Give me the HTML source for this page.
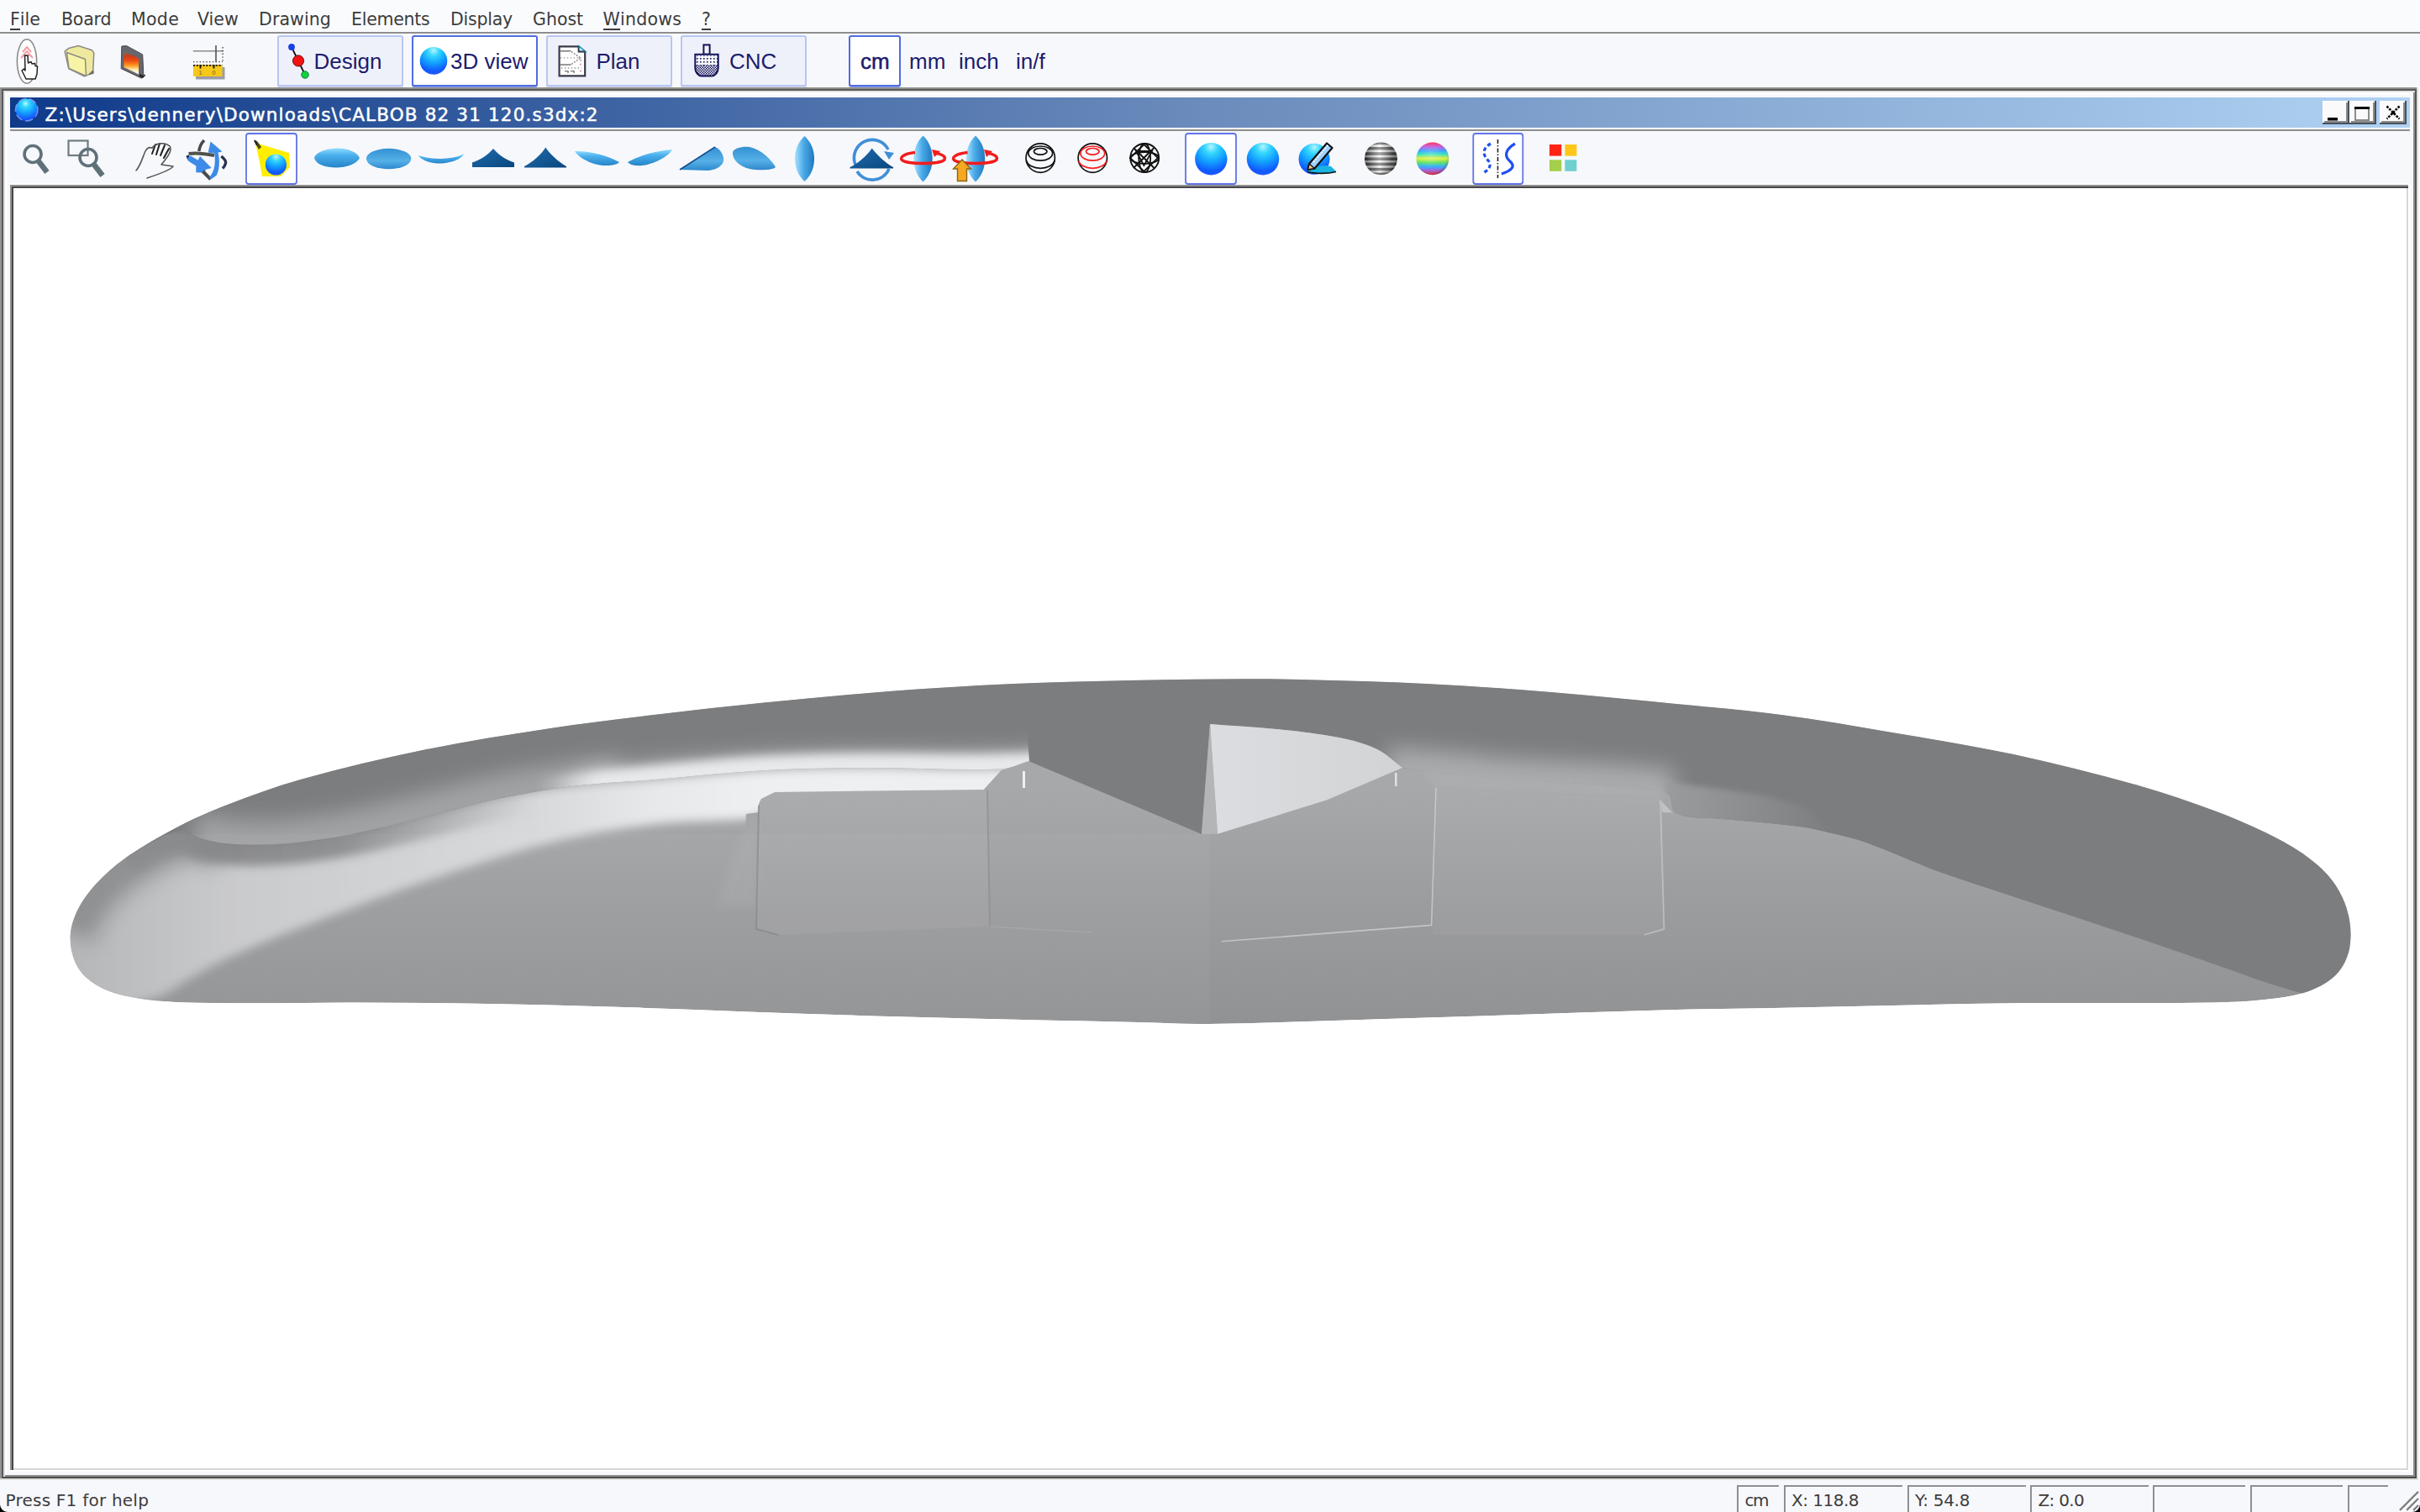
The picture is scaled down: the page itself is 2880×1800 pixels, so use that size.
<!DOCTYPE html>
<html>
<head>
<meta charset="utf-8">
<title>Shape3d X</title>
<style>
html,body{margin:0;padding:0;}
body{width:2880px;height:1800px;overflow:hidden;background:#f7f8fc;position:relative;font-family:"DejaVu Sans","Liberation Sans",sans-serif;}
.abs{position:absolute;}
#menubar{position:absolute;left:0;top:0;width:2880px;height:38px;background:#fafbfd;}
#menubar span{position:absolute;top:11px;font-size:20.5px;line-height:24px;color:#3c3c3c;white-space:nowrap;}
#menubar u{text-decoration:none;border-bottom:2px solid #3c3c3c;display:inline-block;line-height:22px;}
#menuline{position:absolute;left:0;top:38px;width:2880px;height:2px;background:#8e8e90;}
#toolbar{position:absolute;left:0;top:40px;width:2880px;height:64px;background:#f7f8fc;border-top:2px solid #fff;border-bottom:2px solid #fdfdfe;box-sizing:border-box;}
.tbtn{position:absolute;top:42px;height:57px;width:146px;border:2px solid #b9c6f3;background:#eff1fa;border-radius:3px;box-shadow:0 2px 0 #d5daf0;}
.tbtn.on{border-color:#4f6ce3;background:#ffffff;box-shadow:0 1px 0 #8ea2ea;}
.tlabel{position:absolute;font-family:"Liberation Sans",sans-serif;font-size:26px;line-height:30px;color:#1c1c6c;white-space:nowrap;}
#mdi{position:absolute;left:0;top:104px;width:2880px;height:1658px;background:#f7f8fc;}
#title{position:absolute;left:12px;top:116px;width:2856px;height:36px;background:linear-gradient(to right,#0f3a8a 0%,#6b8cbc 50%,#b0d2f3 100%);}
#titletext{position:absolute;left:53.5px;top:123px;font-size:21.5px;line-height:28px;color:#fff;letter-spacing:1.16px;white-space:nowrap;-webkit-text-stroke:0.5px #fff;}
#canvas{position:absolute;left:16px;top:224px;width:2848px;height:1524px;background:#fff;}
#status{position:absolute;left:0;top:1762px;width:2880px;height:38px;background:#f7f8fc;}
.sbox{position:absolute;top:1768px;height:32px;border-left:2px solid #8e8e94;border-top:2px solid #8e8e94;box-sizing:border-box;}
.stext{position:absolute;top:1774px;font-size:20px;letter-spacing:-0.5px;line-height:24px;color:#3c3c3c;white-space:nowrap;}
</style>
</head>
<body>
<!-- MENUBAR -->
<div id="menubar">
<span style="left:12px"><u>F</u>ile</span>
<span style="left:73px;letter-spacing:-0.2px">Board</span>
<span style="left:156px;letter-spacing:0.3px">Mode</span>
<span style="left:235px">View</span>
<span style="left:308px;letter-spacing:0.1px">Drawing</span>
<span style="left:418px;letter-spacing:-0.26px">Elements</span>
<span style="left:536px;letter-spacing:-0.23px">Display</span>
<span style="left:634px">Ghost</span>
<span style="left:717.5px;letter-spacing:0.25px"><u>W</u>indows</span>
<span style="left:835px"><u>?</u></span>
</div>
<div id="menuline"></div>
<!-- TOOLBAR -->
<div id="toolbar"></div>
<div class="tbtn" style="left:330px"></div>
<div class="tbtn on" style="left:490px"></div>
<div class="tbtn" style="left:650px"></div>
<div class="tbtn" style="left:810px"></div>
<div class="tbtn on" style="left:1010px;width:58px"></div>
<div class="tlabel" style="left:373.5px;top:58px">Design</div>
<div class="tlabel" style="left:536px;top:58px">3D view</div>
<div class="tlabel" style="left:709.5px;top:58px">Plan</div>
<div class="tlabel" style="left:868px;top:58px">CNC</div>
<div class="tlabel" style="left:1024px;top:58px;-webkit-text-stroke:0.5px #1c1c6c">cm</div>
<div class="tlabel" style="left:1082px;top:58px">mm</div>
<div class="tlabel" style="left:1141px;top:58px">inch</div>
<div class="tlabel" style="left:1209px;top:58px">in/f</div>
<svg class="abs" style="left:0;top:40px" width="1300" height="64" viewBox="0 40 1300 64">
<defs>
<radialGradient id="gS1" cx="0.5" cy="0.12" r="0.95"><stop offset="0" stop-color="#b4f4ff"/><stop offset="0.22" stop-color="#34d6ff"/><stop offset="0.5" stop-color="#12a0ff"/><stop offset="0.8" stop-color="#1058ff"/><stop offset="1" stop-color="#2c5cf4"/></radialGradient>
<linearGradient id="gFire" x1="0" y1="0" x2="0" y2="1"><stop offset="0" stop-color="#6a7a6a"/><stop offset="0.2" stop-color="#c83a18"/><stop offset="0.4" stop-color="#f04a10"/><stop offset="0.62" stop-color="#ff9a20"/><stop offset="0.8" stop-color="#ffe9b0"/><stop offset="1" stop-color="#ffffff"/></linearGradient>
<pattern id="pSparse" x="0" y="0" width="4" height="4" patternUnits="userSpaceOnUse"><rect x="1" y="1" width="1.6" height="1.6" fill="#14145a"/></pattern>
<pattern id="pDense" x="0" y="0" width="3" height="3" patternUnits="userSpaceOnUse"><rect x="0" y="0" width="1.5" height="1.5" fill="#14145a"/><rect x="1.5" y="1.5" width="1.5" height="1.5" fill="#14145a"/></pattern>
<filter id="tb" x="-20%" y="-20%" width="140%" height="140%"><feGaussianBlur stdDeviation="0.6"/></filter>
</defs>
<!-- A: board + hand -->
<g filter="url(#tb)">
<ellipse cx="32" cy="73" rx="11.6" ry="26.2" fill="#fdfdfd" stroke="#8a8a8a" stroke-width="1.6"/>
<path d="M27,62 L32,56 L37,62 M25,69 L32,61 L39,69 M28,66 L36,66" fill="none" stroke="#f4a0a8" stroke-width="2"/>
<path d="M29.5,66 L33,66 L33.5,75 L37,73.5 L38,76 L41.5,75.5 L42,78.5 L44.5,79 L44,88 L42,94 L31,94 L26,84 L28.5,82 L30,84Z" fill="#fff" stroke="#222" stroke-width="1.5" stroke-linejoin="round"/>
</g>
<!-- B: folder -->
<g filter="url(#tb)" stroke="#8c8c84" stroke-width="1.5" stroke-linejoin="round">
<path d="M81.7,57.4 L93.3,54.5 L109.5,59.7 L111.8,63.1 L110.7,84 L106,88.6 L100.2,90.9 L81.7,81.7 L77.1,61.4Z" fill="#efe9a0"/>
<path d="M79.5,62.5 L101.5,70.5 L102.5,90.5 L82,81.5Z" fill="#f8f4a6"/>
<path d="M106,88.6 L111,87 L110.7,84" fill="#777" stroke="#666"/>
</g>
<!-- C: save -->
<g filter="url(#tb)">
<path d="M144.8,55 L150.6,54.5 L169.7,64.9 L170.8,88.6 L173.1,89.8 L168.5,93.2 L144.2,81.7Z" fill="#66666c" stroke="#4a4a50" stroke-width="1"/>
<path d="M147.4,61.2 L165,69.3 L165,88.4 L147.4,80.1Z" fill="url(#gFire)"/>
<path d="M166,89.5 L171,91.5" stroke="#222" stroke-width="2.6"/>
</g>
<!-- D: ruler -->
<g>
<rect x="233" y="80" width="34.5" height="14.5" fill="#9c9caa"/>
<rect x="230" y="77" width="34.5" height="14" fill="#f5c81a"/>
<path d="M230,77.8 L264.5,77.8" stroke="#111" stroke-width="1.8" stroke-dasharray="2.2 1.6"/>
<path d="M238.5,77 L238.5,81.5 M254.5,77 L254.5,81.5" stroke="#111" stroke-width="1.8"/>
<path d="M229.8,60.8 L265.7,60.8" stroke="#8a8a8a" stroke-width="1.6"/>
<path d="M257,53.9 L257,73.6" stroke="#555" stroke-width="1.6"/>
<path d="M265.1,56 L265.1,73.6 M230,73.6 L265,73.6" stroke="#444" stroke-width="1.4" stroke-dasharray="1.4 2.4"/>
<text x="236.2" y="89.3" font-family="Liberation Sans, sans-serif" font-size="8" font-weight="bold" fill="#a8861a">1</text>
<text x="252.3" y="89.3" font-family="Liberation Sans, sans-serif" font-size="8" font-weight="bold" fill="#a8861a">0</text>
</g>
<!-- Design icon -->
<path d="M347,56 L363,89" stroke="#111" stroke-width="1.8"/>
<circle cx="347" cy="56" r="3.9" fill="#1a3ee0"/>
<circle cx="355" cy="72.4" r="6.6" fill="#f21212" stroke="#400" stroke-width="0.8"/>
<circle cx="363" cy="89" r="4.3" fill="#12d43c" stroke="#063" stroke-width="0.8"/>
<!-- 3D view sphere -->
<circle cx="516" cy="72.4" r="16.3" fill="url(#gS1)"/>
<!-- Plan icon -->
<g>
<path d="M665.6,55.4 L688.6,55.4 L696.2,61.5 L696.2,90.4 L665.6,90.4Z" fill="#fff" stroke="#3a3a48" stroke-width="2.2" stroke-linejoin="miter"/>
<path d="M688.6,54.6 L697,61.5 L688.6,61.5Z" fill="#c8f0ff" stroke="#1a9ac0" stroke-width="1.4"/>
<path d="M688.6,55.4 L688.6,61.5 L696.2,61.5" fill="none" stroke="#3a3a48" stroke-width="1.8"/>
<path d="M667,60.8 L679.5,60.8 M667,77 L679.5,77" stroke="#777" stroke-width="1.6"/>
<path d="M680,61.5 L691,69 L680,76.5" fill="none" stroke="#888" stroke-width="1.4" stroke-dasharray="2 1.5"/>
<path d="M667,68.9 L692,68.9 M668,81 L692,81" stroke="#999" stroke-width="1.4" stroke-dasharray="1.5 2.4"/>
<path d="M672,84.6 L676,84.6 L676,87 M679,84.6 L683,84.6 L683,87" fill="none" stroke="#777" stroke-width="1.4"/>
<path d="M690,72 L692,72 M690,76.5 L692,76.5 M690,84.5 L692,84.5" stroke="#d09090" stroke-width="1.4"/>
</g>
<!-- CNC icon -->
<g>
<rect x="837.4" y="53.4" width="7.2" height="11.3" fill="#f4f5fb" stroke="#14145a" stroke-width="2"/>
<path d="M827.3,64.7 L854.7,64.7 L854.7,81 C854.7,86 851,90.6 847,90.6 L835,90.6 C831,90.6 827.3,86 827.3,81Z" fill="#f4f5fb"/>
<path d="M827.3,66 L854.7,66 L854.7,78 L827.3,78Z" fill="url(#pSparse)"/>
<path d="M827.3,77.5 L854.7,77.5 L854.7,81 C854.7,86 851,90.6 847,90.6 L835,90.6 C831,90.6 827.3,86 827.3,81Z" fill="url(#pDense)"/>
<path d="M827.3,64.7 L854.7,64.7 L854.7,81 C854.7,86 851,90.6 847,90.6 L835,90.6 C831,90.6 827.3,86 827.3,81Z" fill="none" stroke="#14145a" stroke-width="2"/>
</g>
</svg>

<!-- MDI WINDOW -->
<div id="mdi"></div>
<div id="title"></div>
<div id="titletext">Z:\Users\dennery\Downloads\CALBOB 82 31 120.s3dx:2</div>
<svg class="abs" style="left:0;top:100px" width="2880" height="60" viewBox="0 100 2880 60">
<defs>
<radialGradient id="gSph" cx="0.45" cy="0.22" r="0.85"><stop offset="0" stop-color="#c8f4ff"/><stop offset="0.18" stop-color="#38dcff"/><stop offset="0.5" stop-color="#14a0ff"/><stop offset="0.85" stop-color="#1450ff"/><stop offset="1" stop-color="#2a5cf0"/></radialGradient>
</defs>
<circle cx="31.7" cy="130.7" r="13.2" fill="url(#gSph)"/>
<circle cx="31.7" cy="130.7" r="13.2" fill="none" stroke="#7f9cf5" stroke-width="1.6" stroke-dasharray="9 4" opacity="0.85"/>
<g shape-rendering="crispEdges">
<!-- min -->
<rect x="2764" y="120" width="32" height="28" fill="#46525f"/>
<rect x="2764" y="120" width="30" height="26" fill="#ffffff"/>
<rect x="2766" y="122" width="28" height="24" fill="#8c8c8c"/>
<rect x="2766" y="122" width="26" height="22" fill="#fafafa"/>
<rect x="2770" y="140" width="12" height="3" fill="#000"/>
<rect x="2770" y="143" width="12" height="1" fill="#777"/>
<!-- max -->
<rect x="2796" y="120" width="32" height="28" fill="#46525f"/>
<rect x="2796" y="120" width="30" height="26" fill="#ffffff"/>
<rect x="2798" y="122" width="28" height="24" fill="#8c8c8c"/>
<rect x="2798" y="122" width="26" height="22" fill="#fafafa"/>
<rect x="2802" y="128" width="18" height="16" fill="#8c8c8c"/>
<rect x="2804" y="130" width="14" height="12" fill="#fafafa"/>
<rect x="2802" y="127" width="18" height="3" fill="#000"/>
<!-- close -->
<rect x="2832" y="120" width="32" height="28" fill="#46525f"/>
<rect x="2832" y="120" width="30" height="26" fill="#ffffff"/>
<rect x="2834" y="122" width="28" height="24" fill="#8c8c8c"/>
<rect x="2834" y="122" width="26" height="22" fill="#fafafa"/>
</g>
<path d="M2840.5,126.5 L2855.5,141.5 M2855.5,126.5 L2840.5,141.5" stroke="#000" stroke-width="2.6" stroke-dasharray="2.6 1.4"/>
<rect x="2846" y="132" width="4" height="4" fill="#000"/>
</svg>

<svg class="abs" style="left:0;top:156px" width="2880" height="64" viewBox="0 156 2880 64">
<defs>
<radialGradient id="gS2" cx="0.5" cy="0.12" r="0.95"><stop offset="0" stop-color="#b4f4ff"/><stop offset="0.22" stop-color="#34d6ff"/><stop offset="0.5" stop-color="#12a0ff"/><stop offset="0.8" stop-color="#1058ff"/><stop offset="1" stop-color="#2c5cf4"/></radialGradient>
<linearGradient id="gB1" x1="0" y1="0" x2="0" y2="1"><stop offset="0" stop-color="#8fdcff"/><stop offset="0.35" stop-color="#4cb0ee"/><stop offset="1" stop-color="#2584c8"/></linearGradient>
<linearGradient id="gB2" x1="0" y1="0" x2="0" y2="1"><stop offset="0" stop-color="#3490d2"/><stop offset="0.6" stop-color="#56b0e8"/><stop offset="1" stop-color="#2d88cc"/></linearGradient>
<linearGradient id="gB3" x1="0" y1="0" x2="1" y2="0"><stop offset="0" stop-color="#a9e2ff"/><stop offset="0.45" stop-color="#4aaae8"/><stop offset="1" stop-color="#1f78be"/></linearGradient>
<linearGradient id="gT" x1="0" y1="0" x2="1" y2="1"><stop offset="0" stop-color="#1f6cae"/><stop offset="1" stop-color="#0a467e"/></linearGradient>
<linearGradient id="gStripeBg" x1="0" y1="0" x2="1" y2="0"><stop offset="0" stop-color="#666"/><stop offset="0.45" stop-color="#ffffff"/><stop offset="1" stop-color="#555"/></linearGradient>
<linearGradient id="gStripe" x1="0" y1="0" x2="1" y2="0"><stop offset="0" stop-color="#181818"/><stop offset="0.45" stop-color="#8a8a8a"/><stop offset="1" stop-color="#101010"/></linearGradient>
<linearGradient id="gRain" x1="0" y1="0" x2="0" y2="1"><stop offset="0" stop-color="#ff3050"/><stop offset="0.14" stop-color="#c060e0"/><stop offset="0.26" stop-color="#3aa0ff"/><stop offset="0.36" stop-color="#30e0c0"/><stop offset="0.5" stop-color="#e6f23a"/><stop offset="0.62" stop-color="#60e060"/><stop offset="0.74" stop-color="#30b0ff"/><stop offset="0.86" stop-color="#a060e0"/><stop offset="1" stop-color="#ff3040"/></linearGradient>
<radialGradient id="gShade" cx="0.45" cy="0.4" r="0.6"><stop offset="0" stop-color="#fff" stop-opacity="0.25"/><stop offset="0.7" stop-color="#fff" stop-opacity="0"/><stop offset="1" stop-color="#000" stop-opacity="0.25"/></radialGradient>
<clipPath id="cStripe"><circle cx="1643.4" cy="188.8" r="19.4"/></clipPath>
<filter id="ib" x="-20%" y="-20%" width="140%" height="140%"><feGaussianBlur stdDeviation="0.7"/></filter>
</defs>
<rect x="12" y="218" width="2856" height="2" fill="#ffffff"/>
<!-- 1 magnifier -->
<g stroke="#5f7178" fill="none" stroke-linecap="butt">
<circle cx="39" cy="183.5" r="10" stroke-width="3.6"/>
<path d="M46,192 L56,205" stroke-width="6.5"/>
<!-- 2 zoom rect -->
<rect x="81.5" y="167.5" width="23" height="17.5" stroke-width="2.2" stroke="#6d7c83"/>
<circle cx="105" cy="187.5" r="10" stroke-width="3.6"/>
<path d="M112,196 L122,209" stroke-width="6.5"/>
</g>
<!-- 3 hand -->
<g fill="none" stroke="#555" stroke-width="1.6" stroke-linecap="round" stroke-linejoin="round" filter="url(#ib)">
<path d="M162,203 C168,196 170,186 173,180 C175,176 178,175 181,176"/>
<path d="M181,183 L185,172 M186,184 L190,171 M191,185 L196,173 M195,188 L201,177" stroke="#222" stroke-width="2"/>
<path d="M181,176 C186,170 196,169 202,174 C205,178 200,186 196,191 L192,196 L206,198 C204,202 190,207 175,212" />
</g>
<!-- 4 rotate 3D -->
<g filter="url(#ib)">
<path d="M243,167 C239,171 237.5,175 236.8,180" fill="none" stroke="#4a4a4a" stroke-width="3.6"/>
<path d="M224.6,183 C234,181.5 245,183 255,185" fill="none" stroke="#50534a" stroke-width="4"/>
<path d="M223,185 L225,190" stroke="#1a2560" stroke-width="3.4" fill="none"/>
<path d="M222.3,188.4 L227,185.5 L235.6,190.7 L238,186 L251.8,200 L244.9,201.7 L243.7,205.7 L233.3,205.2 L233.3,197.6 L224.6,191.9Z" fill="#3d8be8"/>
<path d="M241.4,204 L250.6,213.3" stroke="#4a4a4a" stroke-width="4" fill="none"/>
<path d="M250.6,168.5 L264.5,180.5 L259.5,181.5 C262,192 261,203 257.5,209 L251,213.5 L249,211 C255,205 257,194 255.2,182.5 L247.7,181.5Z" fill="#3d8be8"/>
<path d="M263.4,186 C267,189 269,192 268.6,194 C268,197 266.5,199 265,200.5" fill="none" stroke="#2a3050" stroke-width="3.4"/>
</g>
<!-- 5 selected: light/sphere -->
<rect x="293" y="159" width="60" height="60" rx="3" fill="#fff" stroke="#6074e8" stroke-width="1.8"/>
<path d="M304,170 L344,182 L345,199 L334,210 L312,210 L310,198Z" fill="#ffee00"/>
<path d="M302,167 L308,178 L311,175 L306,168Z" fill="#4a4a20"/>
<path d="M303,167 L306,173" stroke="#222" stroke-width="2"/>
<circle cx="328.4" cy="196" r="12.6" fill="url(#gS2)"/>
<!-- 6 board top -->
<path d="M374,188 C376,180 392,176.5 402,176.5 C414,176.5 425,181 428,188 C425,195 412,199.5 400,199.5 C388,199.5 376,196 374,188Z" fill="url(#gB1)" filter="url(#ib)"/>
<!-- 7 board bottom -->
<ellipse cx="462.6" cy="189" rx="26.7" ry="12.3" fill="url(#gB2)" filter="url(#ib)"/>
<!-- 8 rocker -->
<path d="M498,185 C512,190 538,191 552,183 C548,192 530,195 520,194.5 C510,194 501,190 498,185Z" fill="url(#gB1)" filter="url(#ib)"/>
<!-- 9 triangle nose -->
<path d="M587,177 C593,184 603,191 612,193.5 L612,199 L562,199 L562,193.5 C571,191 581,184 587,177Z" fill="url(#gT)"/>
<!-- 10 triangle tail -->
<path d="M649.3,175.5 C655,184 665,193 674,198 L674,199.5 L624,199.5 L624,198 C634,193 644,184 649.3,175.5Z" fill="url(#gT)"/>
<!-- 11 leaf -->
<path d="M684,180 C700,179 724,185 737,193 C733,198 715,198.5 704,194 C694,190 687,185 684,180Z" fill="url(#gB1)" filter="url(#ib)"/>
<!-- 12 leaf mirrored -->
<path d="M747,193 C760,185 784,179 800,178 C796,186 780,194 768,196.5 C758,198 750,197 747,193Z" fill="url(#gB1)" filter="url(#ib)"/>
<!-- 13 wedge -->
<path d="M809,202 L851,175 C858,178 862,186 861,192 C859,199 850,202.5 842,203 Z" fill="url(#gB2)" filter="url(#ib)"/>
<path d="M809,202 L851,175" stroke="#14508c" stroke-width="1.6"/>
<!-- 14 blob -->
<path d="M872,181 C874,176 884,174 892,175 C906,178 918,190 923,199 C920,203 900,203 892,201 C880,198 871,190 872,181Z" fill="url(#gB2)" filter="url(#ib)"/>
<!-- 15 vertical lens -->
<path d="M957.5,162.0 C972.9,175.5 972.9,202.5 957.5,216.0 C942.1,202.5 942.1,175.5 957.5,162.0Z" fill="url(#gB3)" filter="url(#ib)"/>
<!-- 16 rotate triangle -->
<path d="M1018,196 A21.5,21.5 0 0 1 1057,178" fill="none" stroke="#3f8fd8" stroke-width="3.6"/>
<path d="M1058,201 A21.5,21.5 0 0 1 1020,204" fill="none" stroke="#3f8fd8" stroke-width="3.6"/>
<path d="M1052,180 L1064,182 L1058,190Z" fill="#3f8fd8"/>
<path d="M1037.7,176.5 C1044,185 1055,195 1063,199 L1063,200.5 L1011.5,200.5 L1011.5,199 C1021,195 1032,185 1037.7,176.5Z" fill="url(#gT)"/>
<!-- 17 lens w/ red ring -->
<path d="M1098.5,161.5 C1113.4,175.2 1113.4,202.8 1098.5,216.5 C1083.6,202.8 1083.6,175.2 1098.5,161.5Z" fill="url(#gB3)" filter="url(#ib)"/>
<path d="M1089,181.5 C1076,183 1071,187 1073,190 C1077,196 1120,196 1124,190 C1126,186 1120,183 1112,182" fill="none" stroke="#f21c1c" stroke-width="3.4"/>
<path d="M1109,178 L1119,180 L1112,187Z" fill="#f21c1c"/>
<!-- 18 lens w/ red ring + arrow -->
<path d="M1161.0,161.5 C1175.9,175.2 1175.9,202.8 1161.0,216.5 C1146.1,202.8 1146.1,175.2 1161.0,161.5Z" fill="url(#gB3)" filter="url(#ib)"/>
<path d="M1151.5,181.5 C1138,183 1133,187 1135,190 C1139,196 1182,196 1186,190 C1188,186 1182,183 1174,182" fill="none" stroke="#f21c1c" stroke-width="3.4"/>
<path d="M1171,178 L1181,180 L1174,187Z" fill="#f21c1c"/>
<path d="M1145,190 L1155.5,201 L1150.5,201 L1150.5,215.5 L1139.5,215.5 L1139.5,201 L1134.5,201Z" fill="#f7a81e" stroke="#8a6414" stroke-width="1.4"/>
<!-- 19 wire sphere -->
<g fill="none" stroke-width="1.7">
<circle cx="1238.2" cy="188.1" r="17.2" stroke="#111"/>
<ellipse cx="1238.2" cy="180.3" rx="7.8" ry="3.8" stroke="#111"/>
<ellipse cx="1238.2" cy="182.6" rx="14.4" ry="8.6" stroke="#111"/>
<path d="M1221.6000000000001,191.5 A16.8,10.5 0 0 0 1254.8,191.5" stroke="#111"/>
</g>
<!-- 20 red/black sphere -->
<g fill="none" stroke-width="1.7">
<circle cx="1300.3" cy="188.1" r="17.2" stroke="#111"/>
<ellipse cx="1300.3" cy="180.3" rx="7.8" ry="3.8" stroke="#f21c1c"/>
<ellipse cx="1300.3" cy="182.6" rx="14.4" ry="8.6" stroke="#f21c1c"/>
<path d="M1283.7,191.5 A16.8,10.5 0 0 0 1316.8999999999999,191.5" stroke="#f21c1c"/>
</g>
<!-- 21 mesh sphere -->
<g fill="none" stroke="#111" stroke-width="1.8">
<circle cx="1362.2" cy="188" r="17"/>
<ellipse cx="1362.2" cy="188" rx="17" ry="7"/>
<ellipse cx="1362.2" cy="188" rx="7" ry="17"/>
<path d="M1349,176 L1373.5,200 M1373.5,176 L1349,200 M1352,180 L1371,180 L1361.4,197Z M1345,188 L1361.4,172 L1378,188 L1361.4,204Z"/>
</g>
<!-- 22 selected sphere -->
<rect x="1411" y="159" width="60" height="60" rx="3" fill="#fff" stroke="#6074e8" stroke-width="1.8"/>
<circle cx="1441.3" cy="189.3" r="19.2" fill="url(#gS2)"/>
<!-- 23 sphere -->
<circle cx="1503" cy="189.3" r="19.2" fill="url(#gS2)"/>
<!-- 24 sphere + pencil -->
<circle cx="1564" cy="189.3" r="18.5" fill="url(#gS2)"/>
<path d="M1556,204 C1560,199 1575,196 1584,198 L1590,204 C1582,207 1566,207 1556,204Z" fill="#19b4e0"/>
<path d="M1556,204.5 C1564,207 1580,207 1590,204.5" stroke="#111" stroke-width="1.8" fill="none"/>
<path d="M1558,195 L1579,170.5 L1585.5,176 L1564.5,200.5 L1556.5,202Z" fill="#9fd0ff" stroke="#111" stroke-width="2.2" stroke-linejoin="round"/>
<path d="M1563,193 L1581,172" stroke="#fff" stroke-width="2" stroke-dasharray="2 1.5"/>
<path d="M1558,195 L1564.5,200.5 L1556.5,202Z" fill="#f5c890" stroke="#111" stroke-width="1.4"/>
<!-- 25 striped sphere -->
<g clip-path="url(#cStripe)">
<rect x="1622" y="168" width="44" height="42" fill="url(#gStripeBg)"/>
<g fill="url(#gStripe)">
<rect x="1622" y="169" width="44" height="3.2"/><rect x="1622" y="175" width="44" height="3.4"/><rect x="1622" y="181.2" width="44" height="3.6"/><rect x="1622" y="187.4" width="44" height="3.6"/><rect x="1622" y="193.6" width="44" height="3.6"/><rect x="1622" y="199.8" width="44" height="3.4"/><rect x="1622" y="205.6" width="44" height="3.2"/>
</g>
<circle cx="1643.4" cy="188.8" r="19.6" fill="url(#gShade)"/>
</g>
<!-- 26 rainbow sphere -->
<circle cx="1704.8" cy="188.8" r="19.4" fill="url(#gRain)"/>
<circle cx="1704.8" cy="188.8" r="19.4" fill="url(#gShade)"/>
<!-- 27 selected S|S -->
<rect x="1753.3" y="159" width="59" height="60" rx="3" fill="#fff" stroke="#6074e8" stroke-width="1.8"/>
<path d="M1782.5,166 L1782.5,212" stroke="#222" stroke-width="1.6" stroke-dasharray="5 2 1.5 2"/>
<path d="M1774,171 C1762,178 1766,186 1771,191 C1776,197 1772,202 1765,206" fill="none" stroke="#1e50f0" stroke-width="3.2" stroke-dasharray="4.5 3"/>
<path d="M1803,171 C1791,178 1790,186 1797,192 C1804,198 1799,203 1787,207" fill="none" stroke="#1e50f0" stroke-width="3.2"/>
<!-- 28 squares -->
<rect x="1844" y="172" width="14.3" height="13.6" fill="#ff2314"/>
<rect x="1862.4" y="172" width="14" height="13.6" fill="#ffc61a"/>
<rect x="1844" y="190.3" width="14.3" height="13.5" fill="#a4cf4a"/>
<rect x="1862.4" y="190.3" width="14" height="13.5" fill="#70cfcf"/>
</svg>

<div id="canvas"></div>
<svg class="abs" style="left:0;top:0" width="2880" height="1800" viewBox="0 0 2880 1800" shape-rendering="crispEdges">
<!-- MDI client sunken edge: top + left -->
<rect x="0" y="104" width="2878" height="2" fill="#8f8e8e"/>
<rect x="2" y="106" width="2874" height="2" fill="#5b5a5a"/>
<rect x="0" y="104" width="2" height="1658" fill="#959393"/>
<rect x="2" y="106" width="2" height="1654" fill="#5b5a5a"/>
<!-- child window raised: left/top highlights -->
<rect x="4" y="108" width="2" height="1650" fill="#dcdcdc"/>
<rect x="6" y="108" width="2" height="1648" fill="#ffffff"/>
<rect x="4" y="108" width="2870" height="2" fill="#e4e4e4"/>
<rect x="6" y="110" width="2866" height="2" fill="#ffffff"/>
<!-- right/bottom shadows -->
<rect x="2872" y="110" width="2" height="1648" fill="#8c8c8c"/>
<rect x="2874" y="108" width="2" height="1652" fill="#555555"/>
<rect x="6" y="1756" width="2868" height="2" fill="#8c8c8c"/>
<rect x="4" y="1758" width="2872" height="2" fill="#4c4c4c"/>
<rect x="2876" y="104" width="2" height="1658" fill="#dededa"/>
<rect x="2878" y="104" width="2" height="1658" fill="#ffffff"/>
<rect x="0" y="1760" width="2878" height="2" fill="#dededa"/>
<!-- line below title -->
<rect x="12" y="152" width="2856" height="2" fill="#ffffff"/>
<rect x="12" y="154" width="2856" height="2" fill="#8e8e8e"/>
<!-- canvas sunken border -->
<rect x="12" y="220" width="2856" height="2" fill="#909092"/>
<rect x="12" y="220" width="2" height="1530" fill="#909092"/>
<rect x="14" y="222" width="2852" height="2" fill="#48484a"/>
<rect x="14" y="222" width="2" height="1528" fill="#48484a"/>
<rect x="2864" y="224" width="2" height="1526" fill="#d6d6d6"/>
<rect x="16" y="1748" width="2850" height="2" fill="#d6d6d6"/>
<rect x="2866" y="220" width="2" height="1532" fill="#ffffff"/>
<rect x="12" y="1750" width="2856" height="2" fill="#ffffff"/>
</svg>

<svg class="abs" style="left:0;top:0" width="2880" height="1800" viewBox="0 0 2880 1800">
<defs>
<clipPath id="bclip"><path d="M83.8,1112.5 C84.6,1102.2 88.1,1092.0 92.7,1082.7 C98.1,1071.9 105.4,1061.9 113.6,1053.0 C124.3,1041.4 136.1,1030.8 149.0,1021.7 C168.0,1008.3 188.3,996.8 208.8,986.0 C228.0,975.9 247.8,966.9 268.0,959.0 C297.4,947.5 327.2,936.5 357.6,928.0 C406.7,914.3 456.4,902.5 506.4,892.3 C555.6,882.2 605.3,874.5 655.0,867.0 C696.5,860.7 738.3,855.8 780.0,850.8 C822.9,845.6 865.8,840.8 908.8,836.5 C958.4,831.5 1007.9,826.8 1057.6,823.0 C1107.0,819.3 1156.5,816.2 1206.0,814.0 C1255.6,811.8 1305.3,810.8 1355.0,809.8 C1396.7,808.9 1438.3,808.5 1480.0,808.3 C1503.0,808.2 1526.0,808.4 1549.0,809.0 C1598.5,810.3 1648.1,811.5 1697.6,814.0 C1747.1,816.5 1796.6,820.0 1846.0,824.0 C1895.7,828.0 1945.4,833.1 1995.0,838.0 C2036.7,842.1 2078.5,845.5 2120.0,851.0 C2163.1,856.7 2205.9,864.1 2248.8,871.4 C2298.5,879.8 2348.3,887.6 2397.6,898.2 C2447.6,908.9 2497.2,921.6 2546.4,935.4 C2576.6,943.9 2606.3,954.3 2635.7,965.2 C2655.8,972.7 2675.7,981.1 2695.0,990.5 C2710.5,998.0 2725.7,1006.2 2740.0,1015.8 C2750.7,1023.1 2760.9,1031.4 2769.6,1041.0 C2776.9,1049.0 2782.9,1058.2 2787.5,1067.9 C2791.9,1077.2 2794.9,1087.4 2796.4,1097.6 C2797.9,1107.4 2798.0,1117.6 2796.4,1127.4 C2795.0,1135.7 2792.1,1143.9 2787.5,1151.0 C2782.9,1158.1 2776.7,1164.3 2769.6,1169.0 C2760.6,1175.0 2750.4,1179.5 2740.0,1182.4 C2725.4,1186.5 2710.1,1188.4 2695.0,1190.0 C2675.3,1192.1 2655.5,1193.2 2635.7,1193.5 C2556.3,1194.6 2477.0,1193.3 2397.6,1194.3 C2298.4,1195.6 2199.2,1198.4 2100.0,1200.3 C2065.0,1201.0 2030.0,1201.0 1995.0,1202.0 C1895.9,1204.8 1796.7,1208.5 1697.6,1211.5 C1611.3,1214.1 1525.0,1217.6 1438.7,1219.0 C1410.8,1219.4 1382.9,1217.7 1355.0,1217.0 C1255.9,1214.7 1156.7,1212.9 1057.6,1210.0 C958.4,1207.1 859.2,1203.0 760.0,1199.6 C725.0,1198.4 690.0,1197.2 655.0,1196.4 C615.3,1195.5 575.7,1194.8 536.0,1194.3 C496.3,1193.8 456.7,1193.5 417.0,1193.5 C377.3,1193.5 337.7,1194.4 298.0,1194.3 C268.3,1194.2 238.5,1194.2 208.8,1192.9 C193.8,1192.2 178.8,1190.9 164.0,1188.4 C152.0,1186.4 139.8,1184.1 128.5,1179.5 C118.8,1175.5 109.4,1170.1 101.7,1163.0 C95.6,1157.3 90.8,1149.9 88.0,1142.0 C84.7,1132.6 83.0,1122.4 83.8,1112.5Z"/></clipPath>
<filter id="bl3" filterUnits="userSpaceOnUse" x="0" y="700" width="2880" height="620"><feGaussianBlur stdDeviation="3"/></filter>
<filter id="bl6" filterUnits="userSpaceOnUse" x="0" y="700" width="2880" height="620"><feGaussianBlur stdDeviation="6"/></filter>
<filter id="bl12" filterUnits="userSpaceOnUse" x="0" y="700" width="2880" height="620"><feGaussianBlur stdDeviation="12"/></filter>
<filter id="bl20" filterUnits="userSpaceOnUse" x="0" y="700" width="2880" height="620"><feGaussianBlur stdDeviation="20"/></filter>
<linearGradient id="gBot" x1="0" y1="940" x2="0" y2="1220" gradientUnits="userSpaceOnUse"><stop offset="0" stop-color="#a7a8aa"/><stop offset="0.5" stop-color="#9b9c9e"/><stop offset="1" stop-color="#919294"/></linearGradient>
<linearGradient id="gRail" x1="90" y1="0" x2="900" y2="0" gradientUnits="userSpaceOnUse"><stop offset="0" stop-color="#b4b5b7"/><stop offset="0.25" stop-color="#c9cacc"/><stop offset="0.68" stop-color="#d8d9db"/><stop offset="0.85" stop-color="#e7e8ea"/><stop offset="1" stop-color="#eeeff1"/></linearGradient>
</defs>
<g clip-path="url(#bclip)">
<path d="M83.8,1112.5 C84.6,1102.2 88.1,1092.0 92.7,1082.7 C98.1,1071.9 105.4,1061.9 113.6,1053.0 C124.3,1041.4 136.1,1030.8 149.0,1021.7 C168.0,1008.3 188.3,996.8 208.8,986.0 C228.0,975.9 247.8,966.9 268.0,959.0 C297.4,947.5 327.2,936.5 357.6,928.0 C406.7,914.3 456.4,902.5 506.4,892.3 C555.6,882.2 605.3,874.5 655.0,867.0 C696.5,860.7 738.3,855.8 780.0,850.8 C822.9,845.6 865.8,840.8 908.8,836.5 C958.4,831.5 1007.9,826.8 1057.6,823.0 C1107.0,819.3 1156.5,816.2 1206.0,814.0 C1255.6,811.8 1305.3,810.8 1355.0,809.8 C1396.7,808.9 1438.3,808.5 1480.0,808.3 C1503.0,808.2 1526.0,808.4 1549.0,809.0 C1598.5,810.3 1648.1,811.5 1697.6,814.0 C1747.1,816.5 1796.6,820.0 1846.0,824.0 C1895.7,828.0 1945.4,833.1 1995.0,838.0 C2036.7,842.1 2078.5,845.5 2120.0,851.0 C2163.1,856.7 2205.9,864.1 2248.8,871.4 C2298.5,879.8 2348.3,887.6 2397.6,898.2 C2447.6,908.9 2497.2,921.6 2546.4,935.4 C2576.6,943.9 2606.3,954.3 2635.7,965.2 C2655.8,972.7 2675.7,981.1 2695.0,990.5 C2710.5,998.0 2725.7,1006.2 2740.0,1015.8 C2750.7,1023.1 2760.9,1031.4 2769.6,1041.0 C2776.9,1049.0 2782.9,1058.2 2787.5,1067.9 C2791.9,1077.2 2794.9,1087.4 2796.4,1097.6 C2797.9,1107.4 2798.0,1117.6 2796.4,1127.4 C2795.0,1135.7 2792.1,1143.9 2787.5,1151.0 C2782.9,1158.1 2776.7,1164.3 2769.6,1169.0 C2760.6,1175.0 2750.4,1179.5 2740.0,1182.4 C2725.4,1186.5 2710.1,1188.4 2695.0,1190.0 C2675.3,1192.1 2655.5,1193.2 2635.7,1193.5 C2556.3,1194.6 2477.0,1193.3 2397.6,1194.3 C2298.4,1195.6 2199.2,1198.4 2100.0,1200.3 C2065.0,1201.0 2030.0,1201.0 1995.0,1202.0 C1895.9,1204.8 1796.7,1208.5 1697.6,1211.5 C1611.3,1214.1 1525.0,1217.6 1438.7,1219.0 C1410.8,1219.4 1382.9,1217.7 1355.0,1217.0 C1255.9,1214.7 1156.7,1212.9 1057.6,1210.0 C958.4,1207.1 859.2,1203.0 760.0,1199.6 C725.0,1198.4 690.0,1197.2 655.0,1196.4 C615.3,1195.5 575.7,1194.8 536.0,1194.3 C496.3,1193.8 456.7,1193.5 417.0,1193.5 C377.3,1193.5 337.7,1194.4 298.0,1194.3 C268.3,1194.2 238.5,1194.2 208.8,1192.9 C193.8,1192.2 178.8,1190.9 164.0,1188.4 C152.0,1186.4 139.8,1184.1 128.5,1179.5 C118.8,1175.5 109.4,1170.1 101.7,1163.0 C95.6,1157.3 90.8,1149.9 88.0,1142.0 C84.7,1132.6 83.0,1122.4 83.8,1112.5Z" fill="url(#gBot)"/>
<clipPath id="railclip"><path d="M40,780 L1224,780 L1224,906.5 L1191.5,917 L1170.7,940 L922,943 L905.8,951 L903,957 L903,967 L888,969 L886,1000 L860,1000 L860,1230 L40,1230Z"/></clipPath>
<linearGradient id="gShadow" x1="170" y1="0" x2="720" y2="0" gradientUnits="userSpaceOnUse"><stop offset="0" stop-color="#7a7b7d" stop-opacity="0.5"/><stop offset="0.15" stop-color="#7a7b7d" stop-opacity="0.85"/><stop offset="0.42" stop-color="#7a7b7d" stop-opacity="0.8"/><stop offset="0.85" stop-color="#7a7b7d" stop-opacity="0"/></linearGradient>
<g clip-path="url(#railclip)">
<path d="M150,1021 C160.0,1015.0 169.5,1008.2 180.0,1003.0 C191.2,997.5 202.3,990.1 214.8,989.0 C223.3,988.3 230.4,995.7 238.6,998.0 C248.2,1000.7 258.1,1002.9 268.0,1003.9 C282.9,1005.4 298.0,1005.7 313.0,1005.4 C327.9,1005.2 342.8,1004.1 357.6,1002.4 C377.5,1000.1 397.4,997.4 417.0,993.5 C447.0,987.5 476.7,979.8 506.4,972.6 C536.2,965.4 565.7,956.6 595.7,950.3 C625.2,944.1 655.0,939.0 685.0,935.4 C716.5,931.6 748.3,930.6 780.0,928.0 C821.0,924.6 861.9,919.8 903.0,917.5 C944.6,915.2 986.3,914.3 1028.0,914.0 C1082.5,913.6 1137.0,917.6 1191.5,915.4 C1202.8,914.9 1213.2,909.1 1224.0,906.0 L1224,906.5 L1224,960 L1170.7,962 L922,965 L905.8,970 L888,975 C852.0,977.0 815.8,976.7 780.0,981.0 C738.0,986.0 696.1,992.8 655.0,1003.0 C604.7,1015.5 555.5,1032.3 506.4,1049.0 C456.3,1066.0 406.9,1084.8 357.6,1104.0 C327.4,1115.8 297.4,1128.4 268.0,1142.0 C252.8,1149.1 238.3,1157.7 223.7,1166.0 C213.6,1171.7 204.6,1179.4 194.0,1184.0 C179.9,1190.1 164.7,1193.3 150.0,1198.0 L40,1210 L40,1021Z" fill="url(#gRail)" filter="url(#bl6)"/>
<path d="M150.0,1021.0 C160.0,1015.0 169.4,1007.8 180.0,1003.0 C191.1,998.0 202.6,992.4 214.8,992.0 C223.3,991.7 230.4,998.7 238.6,1001.0 C248.2,1003.7 258.0,1006.0 268.0,1007.0 C282.9,1008.5 298.0,1008.7 313.0,1008.4 C327.9,1008.1 342.8,1007.1 357.6,1005.4 C377.5,1003.1 397.4,1000.4 417.0,996.5 C447.0,990.5 476.7,982.8 506.4,975.6 C536.2,968.4 565.7,959.6 595.7,953.3 C625.2,947.1 655.1,942.6 685.0,938.4 C703.2,935.8 721.7,934.8 740.0,933.0" fill="none" stroke="url(#gShadow)" stroke-width="44" filter="url(#bl6)"/>
</g>
<path d="M86.0,1112.0 C90.0,1101.3 92.0,1089.7 98.0,1080.0 C104.9,1068.7 114.2,1058.9 124.0,1050.0 C136.3,1038.8 149.4,1028.0 164.0,1020.0 C182.3,1009.9 201.4,999.4 222.0,996.0 C235.4,993.8 248.7,1001.3 262.0,1004.0" fill="none" stroke="#848587" stroke-width="56" filter="url(#bl12)" opacity="0.85"/>
<clipPath id="deckclip"><path d="M40,1021 L150,1021 C160.0,1015.0 169.5,1008.2 180.0,1003.0 C191.2,997.5 202.3,990.1 214.8,989.0 C223.3,988.3 230.4,995.7 238.6,998.0 C248.2,1000.7 258.1,1002.9 268.0,1003.9 C282.9,1005.4 298.0,1005.7 313.0,1005.4 C327.9,1005.2 342.8,1004.1 357.6,1002.4 C377.5,1000.1 397.4,997.4 417.0,993.5 C447.0,987.5 476.7,979.8 506.4,972.6 C536.2,965.4 565.7,956.6 595.7,950.3 C625.2,944.1 655.0,939.0 685.0,935.4 C716.5,931.6 748.3,930.6 780.0,928.0 C821.0,924.6 861.9,919.8 903.0,917.5 C944.6,915.2 986.3,914.3 1028.0,914.0 C1082.5,913.6 1137.0,917.6 1191.5,915.4 C1202.8,914.9 1213.2,909.1 1224.0,906.0 L1430,993 L1440,862 C1466.3,864.0 1492.7,865.3 1519.0,868.0 C1543.9,870.6 1568.9,873.1 1593.5,878.0 C1608.7,881.0 1624.0,884.9 1638.0,891.6 C1649.5,897.1 1658.7,906.5 1669.0,914.0 C1689.3,917.7 1709.7,919.1 1730.0,921.0 C1749.7,922.8 1769.3,925.4 1789.0,927.0 C1809.3,928.7 1829.7,929.8 1850.0,931.0 C1869.3,932.1 1888.7,932.8 1908.0,934.0 C1925.3,935.1 1942.8,935.5 1960.0,938.0 C1968.6,939.2 1978.4,939.4 1985.0,945.0 C1991.3,950.4 1987.4,964.5 1995.0,968.0 C2011.8,975.7 2031.6,973.0 2050.0,975.0 C2065.0,976.6 2080.0,977.5 2095.0,979.0 C2113.0,980.8 2131.1,982.3 2149.0,985.0 C2158.0,986.3 2166.8,988.8 2175.6,991.0 C2190.1,994.6 2204.9,997.4 2219.0,1002.4 C2249.1,1013.1 2278.0,1027.0 2308.0,1038.0 C2337.6,1048.8 2367.7,1058.0 2397.6,1067.9 C2427.4,1077.8 2457.2,1087.7 2487.0,1097.6 C2516.7,1107.5 2546.4,1117.4 2576.0,1127.4 C2595.9,1134.2 2615.8,1141.1 2635.7,1148.0 C2655.5,1154.9 2675.1,1162.4 2695.0,1169.0 C2709.9,1173.9 2724.8,1178.6 2740.0,1182.4 C2759.8,1187.3 2780.0,1190.8 2800.0,1195.0 L2840,1195 L2840,780 L40,780Z"/></clipPath>
<path d="M40,1021 L150,1021 C160.0,1015.0 169.5,1008.2 180.0,1003.0 C191.2,997.5 202.3,990.1 214.8,989.0 C223.3,988.3 230.4,995.7 238.6,998.0 C248.2,1000.7 258.1,1002.9 268.0,1003.9 C282.9,1005.4 298.0,1005.7 313.0,1005.4 C327.9,1005.2 342.8,1004.1 357.6,1002.4 C377.5,1000.1 397.4,997.4 417.0,993.5 C447.0,987.5 476.7,979.8 506.4,972.6 C536.2,965.4 565.7,956.6 595.7,950.3 C625.2,944.1 655.0,939.0 685.0,935.4 C716.5,931.6 748.3,930.6 780.0,928.0 C821.0,924.6 861.9,919.8 903.0,917.5 C944.6,915.2 986.3,914.3 1028.0,914.0 C1082.5,913.6 1137.0,917.6 1191.5,915.4 C1202.8,914.9 1213.2,909.1 1224.0,906.0 L1430,993 L1440,862 C1466.3,864.0 1492.7,865.3 1519.0,868.0 C1543.9,870.6 1568.9,873.1 1593.5,878.0 C1608.7,881.0 1624.0,884.9 1638.0,891.6 C1649.5,897.1 1658.7,906.5 1669.0,914.0 C1689.3,917.7 1709.7,919.1 1730.0,921.0 C1749.7,922.8 1769.3,925.4 1789.0,927.0 C1809.3,928.7 1829.7,929.8 1850.0,931.0 C1869.3,932.1 1888.7,932.8 1908.0,934.0 C1925.3,935.1 1942.8,935.5 1960.0,938.0 C1968.6,939.2 1978.4,939.4 1985.0,945.0 C1991.3,950.4 1987.4,964.5 1995.0,968.0 C2011.8,975.7 2031.6,973.0 2050.0,975.0 C2065.0,976.6 2080.0,977.5 2095.0,979.0 C2113.0,980.8 2131.1,982.3 2149.0,985.0 C2158.0,986.3 2166.8,988.8 2175.6,991.0 C2190.1,994.6 2204.9,997.4 2219.0,1002.4 C2249.1,1013.1 2278.0,1027.0 2308.0,1038.0 C2337.6,1048.8 2367.7,1058.0 2397.6,1067.9 C2427.4,1077.8 2457.2,1087.7 2487.0,1097.6 C2516.7,1107.5 2546.4,1117.4 2576.0,1127.4 C2595.9,1134.2 2615.8,1141.1 2635.7,1148.0 C2655.5,1154.9 2675.1,1162.4 2695.0,1169.0 C2709.9,1173.9 2724.8,1178.6 2740.0,1182.4 C2759.8,1187.3 2780.0,1190.8 2800.0,1195.0 L2840,1195 L2840,780 L40,780Z" fill="#7c7d7f"/>
<g clip-path="url(#deckclip)">
<path d="M230.0,1000.0 C242.7,1002.7 255.1,1006.5 268.0,1008.0 C282.9,1009.8 298.0,1010.2 313.0,1010.0 C327.9,1009.8 342.8,1008.7 357.6,1007.0 C377.5,1004.7 397.4,1002.0 417.0,998.0 C447.0,992.0 476.6,984.2 506.4,977.0 C536.2,969.8 565.7,961.2 595.7,955.0 C625.3,948.9 655.1,944.3 685.0,940.0 C703.2,937.3 721.7,936.0 740.0,934.0" fill="none" stroke="#a1a2a4" stroke-width="66" filter="url(#bl12)"/>
<clipPath id="apprclip"><path d="M600,780 L1216,780 L1225,907 L1225,1000 L600,1000Z"/></clipPath>
<g clip-path="url(#apprclip)">
<linearGradient id="gAppr" x1="640" y1="0" x2="1240" y2="0" gradientUnits="userSpaceOnUse"><stop offset="0" stop-color="#e8e9eb" stop-opacity="0"/><stop offset="0.12" stop-color="#e8e9eb" stop-opacity="1"/><stop offset="1" stop-color="#e8e9eb" stop-opacity="1"/></linearGradient>
<path d="M640.0,947.0 C656.7,945.3 673.3,943.8 690.0,942.0 C720.0,938.8 750.0,934.9 780.0,932.0 C821.0,928.1 861.9,923.8 903.0,921.5 C944.6,919.2 986.3,918.4 1028.0,918.0 C1072.0,917.6 1116.0,919.4 1160.0,919.0 C1193.3,918.7 1226.7,917.0 1260.0,916.0" fill="none" stroke="url(#gAppr)" stroke-width="42" filter="url(#bl6)"/>
<path d="M680.0,945.0 C706.7,941.3 733.2,936.6 760.0,934.0 C807.6,929.3 855.3,925.7 903.0,923.0 C944.6,920.7 986.3,919.5 1028.0,919.0 C1068.7,918.5 1109.3,920.4 1150.0,920.0 C1186.7,919.7 1223.3,918.0 1260.0,917.0" fill="none" stroke="url(#gAppr)" stroke-width="56" filter="url(#bl12)" opacity="0.35"/>
</g>
<path d="M1650.0,914.0 C1656.3,914.7 1662.7,915.4 1669.0,916.0 C1689.3,917.8 1709.7,919.1 1730.0,921.0 C1749.7,922.8 1769.3,925.4 1789.0,927.0 C1809.3,928.7 1829.7,929.8 1850.0,931.0 C1869.3,932.1 1888.7,932.8 1908.0,934.0 C1925.3,935.1 1942.7,935.9 1960.0,938.0 C1970.1,939.2 1980.0,942.0 1990.0,944.0" fill="none" stroke="#a8a9ab" stroke-width="52" filter="url(#bl12)"/>
<path d="M1669.0,918.0 C1689.3,919.7 1709.7,921.1 1730.0,923.0 C1749.7,924.8 1769.3,927.4 1789.0,929.0 C1809.3,930.7 1829.7,931.8 1850.0,933.0 C1869.3,934.1 1888.7,934.8 1908.0,936.0 C1925.3,937.1 1942.7,938.0 1960.0,940.0 C1968.4,941.0 1976.7,943.3 1985.0,945.0" fill="none" stroke="#a8a9ab" stroke-width="20" filter="url(#bl6)"/>
<linearGradient id="gPatch" x1="1985" y1="0" x2="2185" y2="0" gradientUnits="userSpaceOnUse"><stop offset="0" stop-color="#9a9b9d"/><stop offset="0.45" stop-color="#8d8e90"/><stop offset="1" stop-color="#7c7d7f"/></linearGradient>
<path d="M1980,930 L2030,937 L2095,946 L2149,961 L2185,995 L2149,990 L2095,984 L1991,975Z" fill="url(#gPatch)" filter="url(#bl3)"/>
</g>
<linearGradient id="gFace" x1="1440" y1="0" x2="1670" y2="0" gradientUnits="userSpaceOnUse"><stop offset="0" stop-color="#dcdde0"/><stop offset="1" stop-color="#d2d3d5"/></linearGradient>
<path d="M1440,862 C1466.3,864.0 1492.7,865.3 1519.0,868.0 C1543.9,870.6 1568.9,873.1 1593.5,878.0 C1608.7,881.0 1624.0,884.9 1638.0,891.6 C1649.5,897.1 1658.7,906.5 1669.0,914.0 L1578.6,952.6 L1449,992.8Z" fill="url(#gFace)"/>
<path d="M1440,862 L1430,993 L1449,992.8Z" fill="#b4b5b7"/>
<path d="M60,993 L1440,993 L1440,1230 L60,1230Z" fill="#ffffff" opacity="0.035"/>
<path d="M903,958.6 L905.8,951 L922,943 L1170.7,940 L1175,940.7 L1178,1103 L926.7,1113 L900,1106Z" fill="#ffffff" opacity="0.05"/>
<path d="M903,958.6 L900,1106 L926.7,1113" fill="none" stroke="#8a8b8d" stroke-width="2" opacity="0.8"/>
<path d="M1175,940.7 L1178,1103" fill="none" stroke="#8e8f91" stroke-width="2" opacity="0.7"/>
<path d="M1178,1103 L1300,1110" fill="none" stroke="#b0b1b3" stroke-width="1.5" opacity="0.5"/>
<rect x="1217" y="918" width="3" height="20" fill="#f0f0f2"/>
<rect x="1660" y="920" width="2.5" height="16" fill="#e0e1e3"/>
<path d="M1691.7,917 L1709.5,937.7 L1980,952 L1976,940Z" fill="#b0b1b3" opacity="0.55" filter="url(#bl3)"/>
<path d="M1709,937.7 L1703.6,1101.4 L1453.6,1120.8" fill="none" stroke="#d0d1d3" stroke-width="1.6" opacity="0.75"/>
<path d="M1976,952.6 L1980.4,1106 L1956.5,1113" fill="none" stroke="#c6c7c9" stroke-width="1.8" opacity="0.75"/>
<path d="M1976,952.6 L1990.8,967.5 L1978,967Z" fill="#c0c1c3"/>
<path d="M1709.5,940 L1976,952.6 L1980.4,1106 L1956.5,1113 L1705,1113Z" fill="#ffffff" opacity="0.04"/>
<path d="M893,975 Q868,1020 853,1080 L900,1080 L902,970Z" fill="#fff" opacity="0.06" filter="url(#bl6)"/>
</g>
</svg>
<!-- STATUS -->
<div id="status"></div>
<div class="stext" style="left:6.5px;letter-spacing:0.23px">Press F1 for help</div>
<div class="sbox" style="left:2067px;width:50px"></div>
<div class="sbox" style="left:2123px;width:141px"></div>
<div class="sbox" style="left:2270px;width:141px"></div>
<div class="sbox" style="left:2416px;width:141px"></div>
<div class="sbox" style="left:2562px;width:110px"></div>
<div class="sbox" style="left:2678px;width:110px"></div>
<div class="sbox" style="left:2794px;width:48px"></div>
<div class="stext" style="left:2076.5px;letter-spacing:-1.6px">cm</div>
<div class="stext" style="left:2132px">X: 118.8</div>
<div class="stext" style="left:2279px;letter-spacing:-0.3px">Y: 54.8</div>
<div class="stext" style="left:2425.5px;letter-spacing:-0.7px">Z: 0.0</div>
<svg class="abs" style="left:2840px;top:1770px" width="40" height="30" viewBox="2840 1770 40 30">
<g stroke="#fff" stroke-width="2">
<path d="M2857.6,1798.8 L2879,1777.4 M2865.8,1798.8 L2879,1785.6 M2873.8,1798.8 L2879,1793.6"/>
</g>
<g stroke="#808080" stroke-width="2.4">
<path d="M2856,1797.8 L2878,1775.8 M2864.2,1797.8 L2878,1784 M2872.2,1797.8 L2878,1792"/>
</g>
<path d="M2880,1791 A9,9 0 0 1 2871,1800 L2880,1800Z" fill="#000"/>
</svg>
<svg class="abs" style="left:0;top:1788px" width="12" height="12" viewBox="0 1788 12 12">
<path d="M0,1791 A9,9 0 0 0 9,1800 L0,1800Z" fill="#000"/>
</svg>

</body>
</html>
